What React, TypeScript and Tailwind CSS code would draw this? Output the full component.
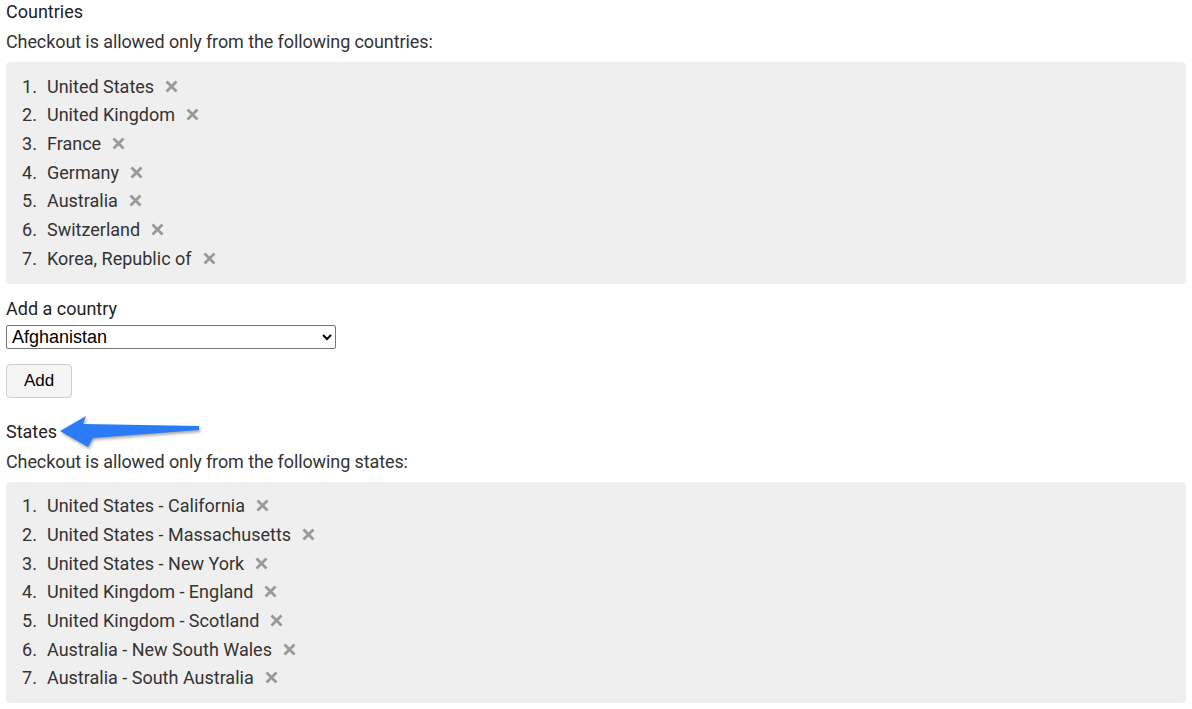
import React from "react";

const countries = [
  "United States",
  "United Kingdom",
  "France",
  "Germany",
  "Australia",
  "Switzerland",
  "Korea, Republic of",
];

const states = [
  "United States - California",
  "United States - Massachusetts",
  "United States - New York",
  "United Kingdom - England",
  "United Kingdom - Scotland",
  "Australia - New South Wales",
  "Australia - South Australia",
];

function RemoveIcon() {
  return (
    <svg width="13" height="13" viewBox="0 0 13 13" className="ml-[11px] shrink-0">
      <path d="M1.5 1.5 L11.5 11.5 M11.5 1.5 L1.5 11.5" stroke="#999" strokeWidth="2.8" strokeLinecap="butt" />
    </svg>
  );
}

function ItemList({ items }: { items: string[] }) {
  return (
    <ol className="rounded-[4px] bg-[#efefef] pt-[10px] pb-[11px] pl-[16px]">
      {items.map((item, i) => (
        <li key={item} className="flex h-[28.67px] items-center">
          <span className="w-[25px]">{i + 1}.</span>
          <span>{item}</span>
          <RemoveIcon />
        </li>
      ))}
    </ol>
  );
}

function Arrow() {
  return (
    <svg
      className="pointer-events-none absolute left-[56px] top-[410px]"
      width="150"
      height="44"
      viewBox="56 410 150 44"
      style={{ filter: "drop-shadow(1px 2px 1.5px rgba(0,0,0,0.35))" }}
    >
      <path
        d="M60 431 L86 416 L83 424 L199 426 L199 430 L93 438 L88 447 Z"
        fill="#2a7bf5"
      />
    </svg>
  );
}

export default function App() {
  return (
    <div className="relative w-[1192px] bg-white pl-[6px] pr-[6px] text-[18px] text-[#333] [font-family:Roboto,'Liberation_Sans',sans-serif]">
      <div className="pt-[1px] leading-[22px] text-[#222]">Countries</div>
      <div className="mt-[8px] leading-[22px] tracking-[-0.1px]">Checkout is allowed only from the following countries:</div>
      <div className="mt-[9px]">
        <ItemList items={countries} />
      </div>

      <div className="mt-[14px] leading-[22px] text-[#222]">Add a country</div>
      <select className="mt-[5px] block h-[24px] w-[330px] rounded-[2px] border border-[#767676] bg-white pl-[1px] text-[18px] text-black [font-family:'Liberation_Sans',Arial,sans-serif]">
        <option>Afghanistan</option>
      </select>
      <button className="mt-[15px] block h-[34px] w-[66px] rounded-[4px] border border-[#cfcfcf] bg-[#f5f5f5] text-[17px] text-black [font-family:'Liberation_Sans',Arial,sans-serif]">
        Add
      </button>

      <div className="mt-[23px] leading-[22px] text-[#222]">States</div>
      <div className="mt-[8px] leading-[22px] tracking-[-0.1px]">Checkout is allowed only from the following states:</div>
      <div className="mt-[9px] pb-[6px]">
        <ItemList items={states} />
      </div>

      <Arrow />
    </div>
  );
}
